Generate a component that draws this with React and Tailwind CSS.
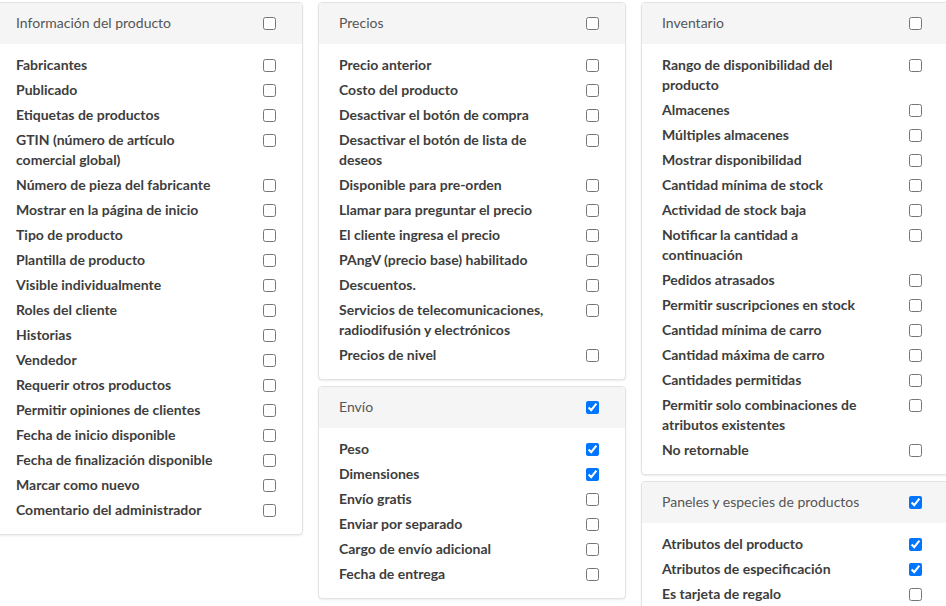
import React from 'react';

const groups = [
  [
    {
      title: 'Información del producto',
      checked: false,
      items: [
        ['Fabricantes'],
        ['Publicado'],
        ['Etiquetas de productos'],
        ['GTIN (número de artículo comercial global)'],
        ['Número de pieza del fabricante'],
        ['Mostrar en la página de inicio'],
        ['Tipo de producto'],
        ['Plantilla de producto'],
        ['Visible individualmente'],
        ['Roles del cliente'],
        ['Historias'],
        ['Vendedor'],
        ['Requerir otros productos'],
        ['Permitir opiniones de clientes'],
        ['Fecha de inicio disponible'],
        ['Fecha de finalización disponible'],
        ['Marcar como nuevo'],
        ['Comentario del administrador'],
      ],
    },
  ],
  [
    {
      title: 'Precios',
      checked: false,
      items: [
        ['Precio anterior'],
        ['Costo del producto'],
        ['Desactivar el botón de compra'],
        ['Desactivar el botón de lista de deseos'],
        ['Disponible para pre-orden'],
        ['Llamar para preguntar el precio'],
        ['El cliente ingresa el precio'],
        ['PAngV (precio base) habilitado'],
        ['Descuentos.'],
        ['Servicios de telecomunicaciones, radiodifusión y electrónicos'],
        ['Precios de nivel'],
      ],
    },
    {
      title: 'Envío',
      checked: true,
      items: [
        ['Peso', true],
        ['Dimensiones', true],
        ['Envío gratis'],
        ['Enviar por separado'],
        ['Cargo de envío adicional'],
        ['Fecha de entrega'],
      ],
    },
  ],
  [
    {
      title: 'Inventario',
      checked: false,
      items: [
        ['Rango de disponibilidad del producto'],
        ['Almacenes'],
        ['Múltiples almacenes'],
        ['Mostrar disponibilidad'],
        ['Cantidad mínima de stock'],
        ['Actividad de stock baja'],
        ['Notificar la cantidad a continuación'],
        ['Pedidos atrasados'],
        ['Permitir suscripciones en stock'],
        ['Cantidad mínima de carro'],
        ['Cantidad máxima de carro'],
        ['Cantidades permitidas'],
        ['Permitir solo combinaciones de atributos existentes'],
        ['No retornable'],
      ],
    },
    {
      title: 'Paneles y especies de productos',
      checked: true,
      items: [
        ['Atributos del producto', true],
        ['Atributos de especificación', true],
        ['Es tarjeta de regalo'],
      ],
    },
  ],
];

const Box = ({ checked, header }) => (
  <input
    type="checkbox"
    defaultChecked={!!checked}
    className={header ? 'shrink-0 -mt-[1px] mb-0 mx-[3px]' : 'shrink-0 mt-[4px] mb-0 mx-[3px]'}
  />
);

const Card = ({ group }) => (
  <div className="bg-white border border-[#e3e3e3] rounded-[4px] shadow-[0_1px_2px_rgba(0,0,0,0.08)] overflow-hidden">
    <div className="h-[41px] bg-[#f5f5f5] flex items-center justify-between pl-[20px] pr-[23px]">
      <span className="text-[14px] text-[#555] -mt-[2px]">{group.title}</span>
      <Box checked={group.checked} header />
    </div>
    <div className="pt-[11px] pb-[14px] pl-[20px] pr-[23px] flex flex-col gap-[5px]">
      {group.items.map(([label, checked]) => (
        <div key={label} className="flex items-start justify-between">
          <span className="w-[212px] text-[14px] leading-5 font-bold text-[#3d3d3d]">{label}</span>
          <Box checked={checked} />
        </div>
      ))}
    </div>
  </div>
);

export default function App() {
  return (
    <div className="w-[946px] h-[606px] overflow-hidden bg-white" style={{ fontFamily: 'Lato, "Open Sans", sans-serif' }}>
      <div className="flex items-start gap-[15px] ml-[-5px] mt-[2px]">
        {groups.map((col, i) => (
          <div key={i} className="w-[308px] shrink-0 flex flex-col gap-[6px]">
            {col.map((g) => (
              <Card key={g.title} group={g} />
            ))}
          </div>
        ))}
      </div>
    </div>
  );
}
